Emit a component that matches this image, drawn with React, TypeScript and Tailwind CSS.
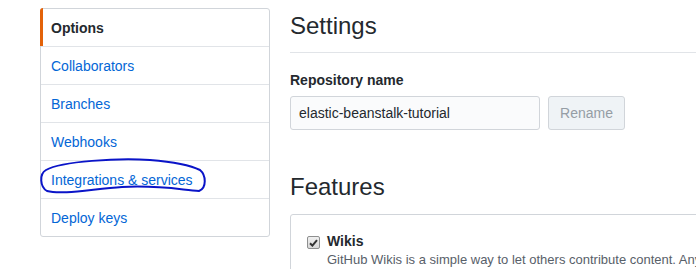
import React from 'react';

const menu = ['Options', 'Collaborators', 'Branches', 'Webhooks', 'Integrations & services', 'Deploy keys'];

function Sidebar() {
    return (
        <nav className='mt-[8px] w-[230px] shrink-0 border border-[#d1d5da] rounded-[3px] bg-white'>
            {menu.map((item, i) => {
                const selected = i === 0;
                const last = i === menu.length - 1;
                return (
                    <div
                        key={item}
                        className={`relative flex items-center pl-[10px] text-[14px] leading-[20px] ${last ? 'h-[37px]' : 'h-[38px] border-b border-[#e1e4e8]'} ${selected ? 'font-semibold text-[#24292e]' : 'text-[#0366d6]'}`}
                    >
                        {selected && <span className='absolute left-[-1px] top-[-1px] bottom-0 w-[3px] bg-[#e36209] rounded-tl-[3px]' />}
                        {item}
                    </div>
                );
            })}
        </nav>
    );
}

function Checkbox() {
    return (
        <span className='flex items-center justify-center w-[13px] h-[13px] border border-[#8e8f8f] rounded-[2px] bg-gradient-to-b from-[#f0f0f0] to-[#d8d8d8]'>
            <svg width='9' height='8' viewBox='0 0 9 8'>
                <path d='M1 4.2 L3.4 6.6 L8 1.2' stroke='#333' strokeWidth='2' fill='none' />
            </svg>
        </span>
    );
}

export default function App() {
    return (
        <div className='relative w-[696px] h-[269px] overflow-hidden bg-white' style={{ fontFamily: '"Liberation Sans", Arial, sans-serif' }}>
            <div className='flex items-start pl-[40px]'>
                <Sidebar />
                <main className='ml-[20px] w-[520px] shrink-0'>
                    <div className='mt-[11px] pb-[11px] border-b border-[#e1e4e8]'>
                        <h2 className='text-[24px] leading-[30px] font-normal text-[#24292e]'>Settings</h2>
                    </div>
                    <div className='mt-[17px]'>
                        <label className='block text-[14px] leading-[20px] font-bold text-[#24292e]'>Repository name</label>
                        <div className='flex items-center gap-[8px] mt-[6px]'>
                            <input
                                readOnly
                                value='elastic-beanstalk-tutorial'
                                className='w-[250px] h-[34px] px-[8px] text-[14px] text-[#24292e] bg-[#fafbfc] border border-[#d1d5da] rounded-[3px] outline-none'
                            />
                            <button className='w-[77px] h-[34px] text-[14px] text-[#959da5] bg-[#eff3f6] border border-[#d1d5da] rounded-[3px]'>
                                Rename
                            </button>
                        </div>
                    </div>
                    <h2 className='mt-[42px] text-[24px] leading-[30px] font-normal text-[#24292e]'>Features</h2>
                    <div className='mt-[12px] border border-[#d1d5da] rounded-[3px] pt-[16px] pl-[16px] h-[80px]'>
                        <div className='flex'>
                            <div className='pt-[5px] w-[20px] shrink-0'>
                                <Checkbox />
                            </div>
                            <div className='whitespace-nowrap'>
                                <div className='text-[14px] leading-[20px] font-bold text-[#24292e]'>Wikis</div>
                                <p className='text-[13px] leading-[18px] text-[#586069]'>
                                    GitHub Wikis is a simple way to let others contribute content. Any GitHub user can create and edit pages to use for documentation.
                                </p>
                            </div>
                        </div>
                    </div>
                </main>
            </div>
            <svg className='absolute left-0 top-0 pointer-events-none' width='696' height='269'>
                <path
                    d='M46 170 C62 161, 118 158, 150 160 C174 162, 190 165, 200 170 C206 175, 207 188, 199 191 C182 190, 160 185, 122 187 C92 189, 62 195, 47 191 C40 187, 39 174, 46 170 Z'
                    fill='none'
                    stroke='#0a14c8'
                    strokeWidth='2'
                    strokeLinejoin='round'
                />
            </svg>
        </div>
    );
}
